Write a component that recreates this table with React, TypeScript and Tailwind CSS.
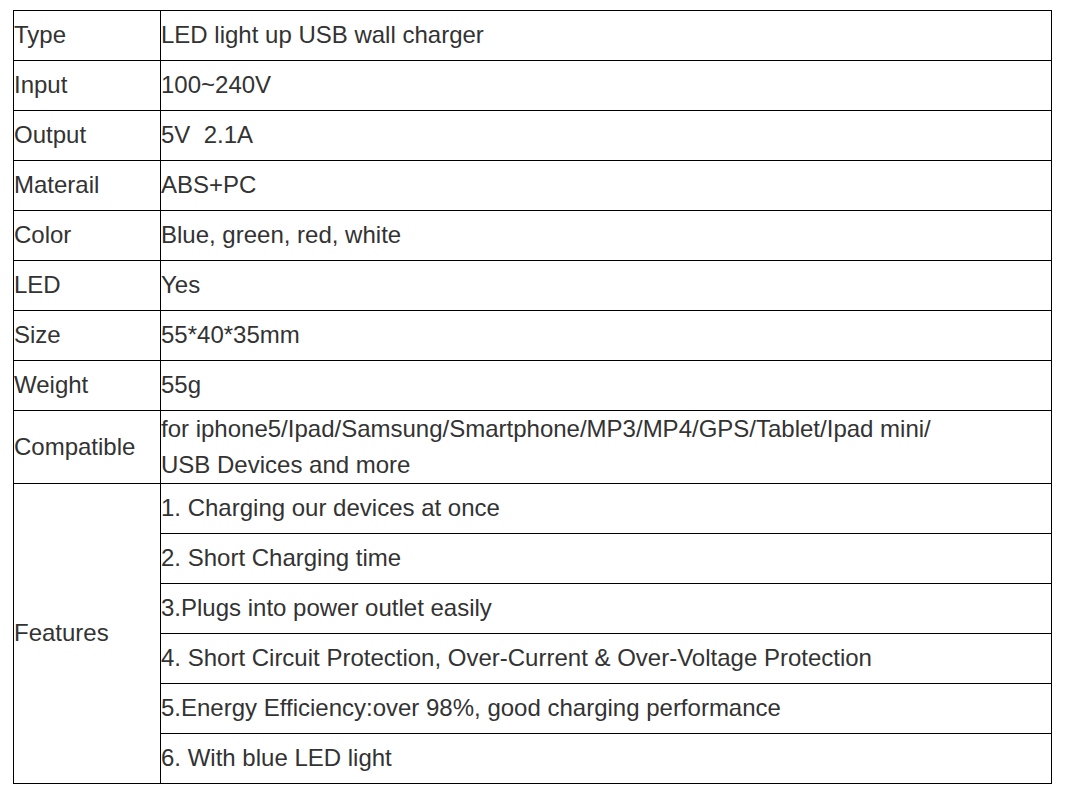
import React from "react";

const rows: [string, string][] = [
  ["Type", "LED light up USB wall charger"],
  ["Input", "100~240V"],
  ["Output", "5V\u00a0\u00a02.1A"],
  ["Materail", "ABS+PC"],
  ["Color", "Blue, green, red, white"],
  ["LED", "Yes"],
  ["Size", "55*40*35mm"],
  ["Weight", "55g"],
];

const features = [
  "1. Charging our devices at once",
  "2. Short Charging time",
  "3.Plugs into power outlet easily",
  "4. Short Circuit Protection, Over-Current & Over-Voltage Protection",
  "5.Energy Efficiency:over 98%, good charging performance",
  "6. With blue LED light",
];

export default function App() {
  const td = "border border-black p-0 align-middle";
  const td1 = "border border-black px-0 pt-0 pb-[2px] align-middle";
  return (
    <div className="min-h-screen bg-white pl-[13px] pt-[10px] text-[24px] leading-[36px] text-[#333333]" style={{ fontFamily: '"Liberation Sans", Arial, sans-serif' }}>
      <table className="w-[1039px] border-collapse">
        <tbody>
          {rows.map(([k, v]) => (
            <tr key={k} className="h-[50px]">
              <td className={`${td1} w-[147px]`}>{k}</td>
              <td className={td1}>{v}</td>
            </tr>
          ))}
          <tr className="h-[73px]">
            <td className={`${td} w-[147px]`}>Compatible</td>
            <td className={td}>
              for iphone5/Ipad/Samsung/Smartphone/MP3/MP4/GPS/Tablet/Ipad mini/
              <br />
              USB Devices and more
            </td>
          </tr>
          {features.map((f, i) => (
            <tr key={f} className="h-[50px]">
              {i === 0 && (
                <td className={`${td1} w-[147px]`} rowSpan={6}>
                  Features
                </td>
              )}
              <td className={td1}>{f}</td>
            </tr>
          ))}
        </tbody>
      </table>
    </div>
  );
}
